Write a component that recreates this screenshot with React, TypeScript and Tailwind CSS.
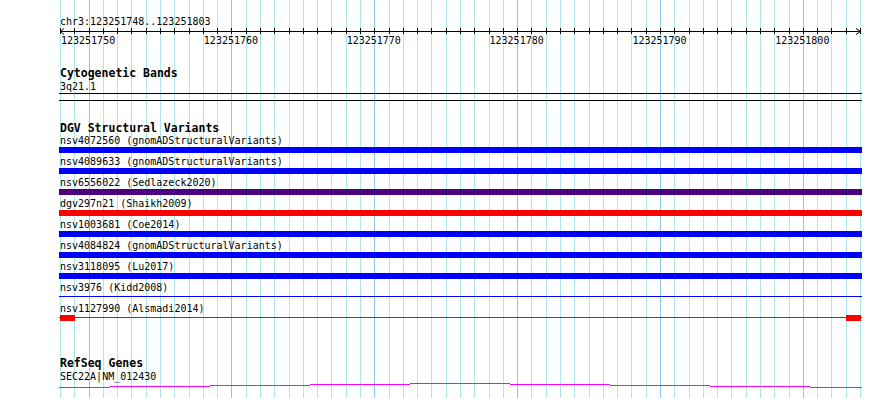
import React from "react";

const GRID = Array.from({ length: 57 }, (_, k) => ({
  x: Math.round(60 + (k * 800) / 56),
  major: (k - 2) % 10 === 0 && k >= 2,
}));

type Row = { label: string; kind: "bar" | "line" | "ends"; cls: string };

const ROWS: Row[] = [
  { label: "nsv4072560 (gnomADStructuralVariants)", kind: "bar", cls: "bg-[#0000ff]" },
  { label: "nsv4089633 (gnomADStructuralVariants)", kind: "bar", cls: "bg-[#0000ff]" },
  { label: "nsv6556022 (Sedlazeck2020)", kind: "bar", cls: "bg-[#4b0082]" },
  { label: "dgv297n21 (Shaikh2009)", kind: "bar", cls: "bg-[#ff0000]" },
  { label: "nsv1003681 (Coe2014)", kind: "bar", cls: "bg-[#0000ff]" },
  { label: "nsv4084824 (gnomADStructuralVariants)", kind: "bar", cls: "bg-[#0000ff]" },
  { label: "nsv3118095 (Lu2017)", kind: "bar", cls: "bg-[#0000ff]" },
  { label: "nsv3976 (Kidd2008)", kind: "line", cls: "bg-[#0000ff]" },
  { label: "nsv1127990 (Alsmadi2014)", kind: "ends", cls: "bg-[#ff0000]" },
];

const LABELS = ["123251750", "123251760", "123251770", "123251780", "123251790", "123251800"];

const MAGENTA = [
  [59, 110, 387],
  [110, 210, 386],
  [210, 310, 385],
  [310, 410, 384],
  [410, 510, 383],
  [510, 610, 384],
  [610, 710, 385],
  [710, 810, 386],
  [810, 862, 387],
];

function Ruler() {
  return (
    <svg width={803} height={8} shapeRendering="crispEdges">
      <line x1={1} y1={4.5} x2={802} y2={4.5} stroke="#000" strokeWidth={1} />
      {GRID.map((g, i) => (
        <line key={i} x1={g.x - 59 + 0.5} y1={1} x2={g.x - 59 + 0.5} y2={7} stroke="#000" strokeWidth={1} />
      ))}
      <polyline points="5,1.5 1.5,4.5 5,7.5" fill="none" stroke="#000" strokeWidth={1} shapeRendering="auto" />
      <polyline points="797,1.5 801.5,4.5 797,7.5" fill="none" stroke="#000" strokeWidth={1} shapeRendering="auto" />
    </svg>
  );
}

function TrackRow({ row }: { row: Row }) {
  return (
    <div className="h-[21px] flex flex-col">
      <div className="h-[11px] pl-[1px] text-[10px] leading-[11px] whitespace-nowrap">{row.label}</div>
      <div className="mt-[1px] h-[6px] flex">
        {row.kind === "bar" && <div className={`h-[6px] w-full ${row.cls}`} />}
        {row.kind === "line" && <div className={`mt-[2px] h-[1px] w-full ${row.cls}`} />}
        {row.kind === "ends" && (
          <>
            <div className="mt-[2px] h-[1px] w-[1px] bg-[#ff0000]" />
            <div className="h-[6px] w-[15px] bg-[#ff0000]" />
            <div className="mt-[2px] h-[1px] flex-1 bg-[#ff0000]" />
            <div className="h-[6px] w-[15px] bg-[#ff0000]" />
            <div className="mt-[2px] h-[1px] w-[1px] bg-[#ff0000]" />
          </>
        )}
      </div>
    </div>
  );
}

export default function App() {
  return (
    <div className="relative w-[890px] h-[398px] overflow-hidden bg-white text-black font-['DejaVu_Sans_Mono',monospace]">
      <svg className="absolute left-0 top-0" width={890} height={398} shapeRendering="crispEdges">
        {GRID.map((g, i) => (
          <line
            key={i}
            x1={g.x + 0.5}
            y1={0}
            x2={g.x + 0.5}
            y2={398}
            stroke={g.major ? "#8cc8e8" : "#ace8ee"}
            strokeWidth={1}
          />
        ))}
      </svg>

      <div className="relative ml-[59px] w-[803px] pt-[16px] flex flex-col">
        <div className="h-[11px] pl-[1px] text-[10px] leading-[11px] whitespace-nowrap">chr3:123251748..123251803</div>
        <Ruler />
        <div className="h-[11px] pl-[2px] flex gap-[88.857px] text-[10px] leading-[11px]">
          {LABELS.map((l) => (
            <div key={l} className="w-[54px] shrink-0 whitespace-nowrap">{l}</div>
          ))}
        </div>

        <div className="mt-[21px] h-[13px] pl-[1px] text-[11.5px] font-bold leading-[13px] whitespace-nowrap">Cytogenetic Bands</div>
        <div className="mt-[1px] h-[11px] pl-[1px] text-[10px] leading-[11px]">3q21.1</div>
        <div className="mt-[1px] h-[8px] border-y border-black" />

        <div className="mt-[21px] h-[13px] pl-[1px] text-[11.5px] font-bold leading-[13px] whitespace-nowrap">DGV Structural Variants</div>
        {ROWS.map((r) => (
          <TrackRow key={r.label} row={r} />
        ))}

        <div className="mt-[33px] h-[13px] pl-[1px] text-[11.5px] font-bold leading-[13px] whitespace-nowrap">RefSeq Genes</div>
        <div className="mt-[1px] h-[11px] pl-[1px] text-[10px] leading-[11px] whitespace-nowrap">SEC22A|NM_012430</div>
        <svg width={803} height={8} shapeRendering="crispEdges">
          {MAGENTA.map(([a, b, y], i) => (
            <rect key={i} x={a - 59} y={y - 382} width={b - a} height={1} fill="#ff00ff" />
          ))}
        </svg>
      </div>
    </div>
  );
}
